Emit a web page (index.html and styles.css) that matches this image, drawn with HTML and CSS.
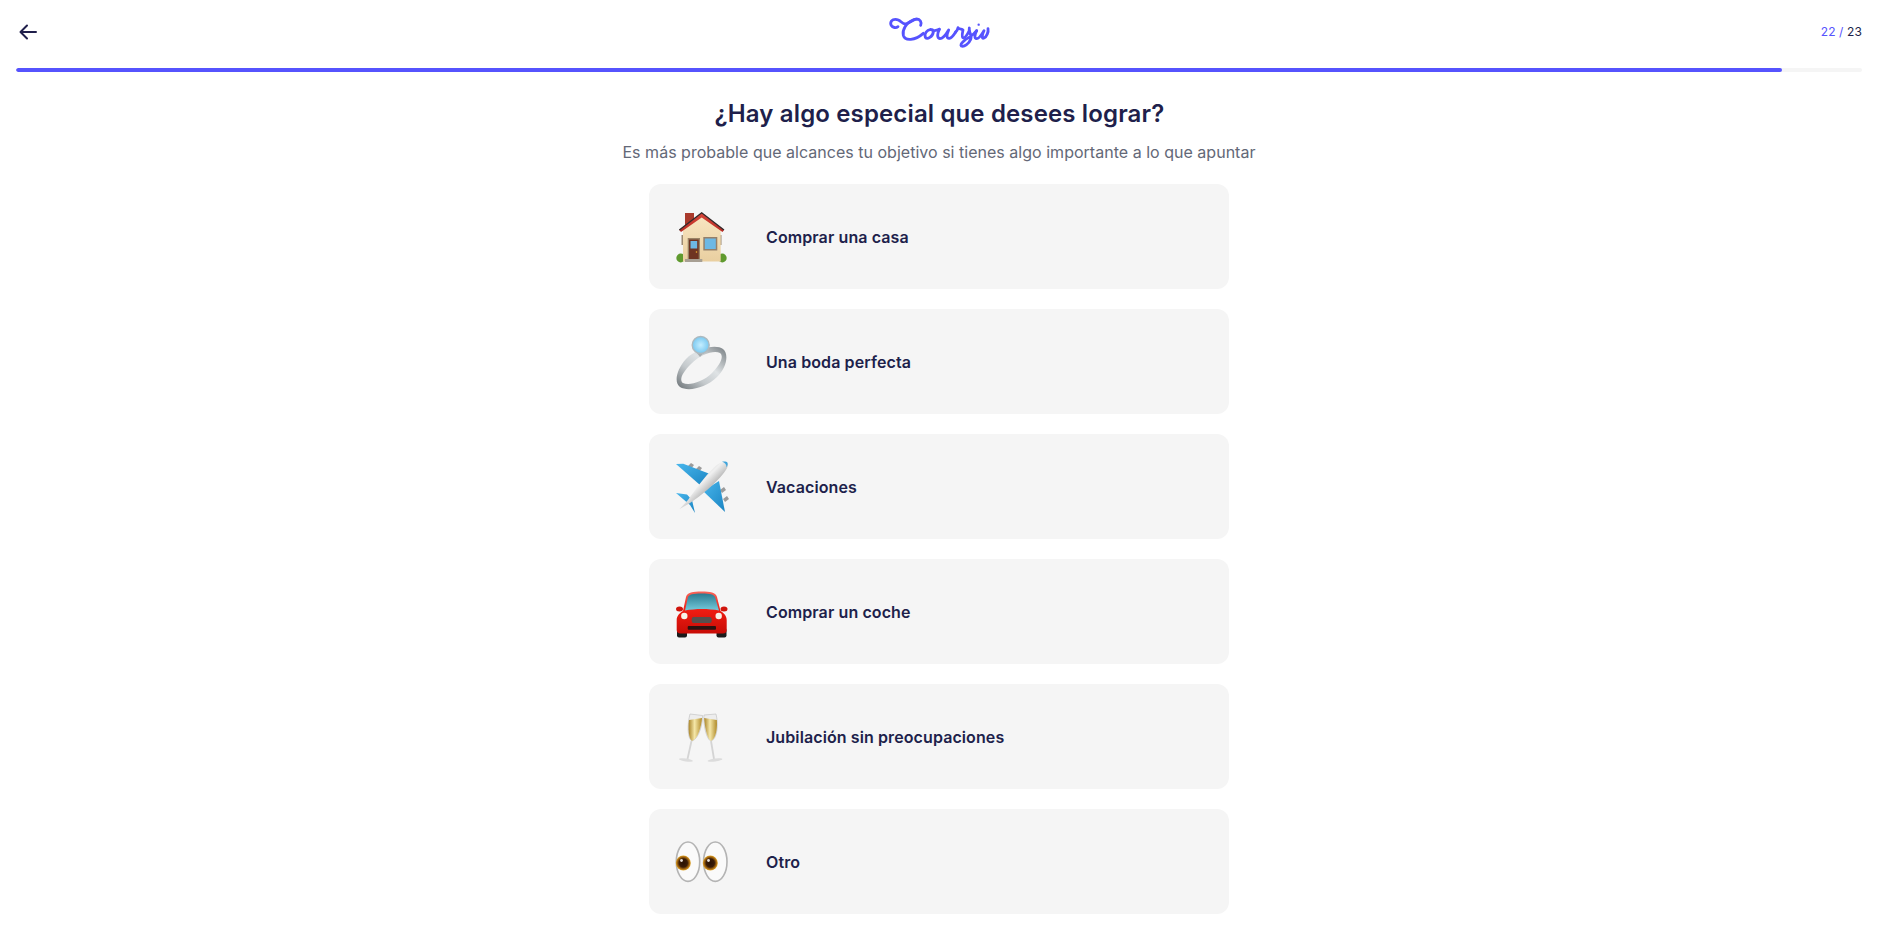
FILE: index.html
```html
<!DOCTYPE html>
<html lang="es">
<head>
<meta charset="utf-8">
<title>Coursiv</title>
<link rel="stylesheet" href="styles.css">
</head>
<body>
<header class="topbar">
  <svg class="back" width="24" height="24" viewBox="0 0 24 24" fill="none" stroke="#201f4b" stroke-width="2" stroke-linecap="round" stroke-linejoin="round"><path d="M20 12H5M11 5.500L4.500 12L11 18.500"/></svg>
  <svg class="logo" width="110" height="40" viewBox="75 30 330 120" fill="none" stroke="#5653fe" stroke-width="8.500" stroke-linecap="round" stroke-linejoin="round">
    <path d="M114 80C106 86 93 81 92 71C92 60 104 55 115 60C124 64 128 73 137 72C147 71 157 58 170 57C180 57 186 66 182 76"/>
    <path d="M160 60C138 68 126 90 130 106C135 124 165 122 190 100"/>
    <path d="M212 88C200 90 192 102 196 112C202 120 218 110 220 96C221 90 216 88 212 88C220 94 230 92 238 88"/>
    <path d="M238 88C232 100 230 114 240 116C250 116 260 100 266 90C260 104 258 116 268 115C276 114 282 104 287 96"/>
    <path d="M287 96C291 92 293 88 294 83C298 89 306 86 309 90C307 100 304 112 310 114C316 114 322 104 328 92"/>
    <path d="M328 84C324 96 338 104 332 118C326 132 312 142 304 138C298 132 316 118 328 112C338 106 344 100 350 92"/>
    <path d="M350 92C344 104 342 116 350 116C358 116 366 102 372 92C366 104 364 118 372 114C380 110 386 96 384 86"/>
    <circle cx="356" cy="74" r="3.500" fill="#5653fe" stroke="none"/>
  </svg>
  <div class="counter"><span class="current">22 /</span> 23</div>
</header>
<div class="track"><div class="fill"></div></div>
<main class="page">
  <h1 class="title">¿Hay algo especial que desees lograr?</h1>
  <p class="subtitle">Es más probable que alcances tu objetivo si tienes algo importante a lo que apuntar</p>
  <ul class="options">
    <li class="option">
      <svg class="emoji" viewBox="0 0 56 56">
        <defs><linearGradient id="wall" x1="0" y1="0" x2="0" y2="1"><stop offset="0" stop-color="#f8e6c2"/><stop offset="1" stop-color="#e9cfa0"/></linearGradient>
        <linearGradient id="roof" x1="0" y1="0" x2="0" y2="1"><stop offset="0" stop-color="#d8473a"/><stop offset="1" stop-color="#b82c24"/></linearGradient></defs>
        <rect x="12" y="4" width="9" height="13" fill="#a93a2c"/>
        <circle cx="7.700" cy="49" r="4.400" fill="#5f9a2e"/><circle cx="49.300" cy="49" r="4.400" fill="#5f9a2e"/>
        <rect x="8.500" y="26" width="40" height="10" fill="#9c8a72"/>
        <path d="M10 20L28.700 6L47.700 20V52.500H10Z" fill="url(#wall)"/>
        <path d="M6.300 21L28.700 3.800L51 21L49.500 23L28.700 8.500L8 23Z" fill="url(#roof)"/>
        <path d="M6.300 21L28.700 3.800L51 21" fill="none" stroke="#33292a" stroke-width="1.400"/>
        <rect x="14.700" y="29" width="12.300" height="21.500" fill="#9a8466"/>
        <rect x="16" y="30.500" width="9.700" height="20" fill="#6e3422"/>
        <rect x="17.500" y="32" width="6.700" height="7.500" fill="#6db8e4"/>
        <circle cx="23.500" cy="43" r=".8" fill="#f2b632"/>
        <rect x="30.300" y="28" width="14" height="13.500" fill="#94806a"/>
        <rect x="31.800" y="29.500" width="11" height="10.500" fill="#6db8e4"/>
        <rect x="12" y="50" width="17.300" height="3" fill="#a79f93"/>
      </svg>
      <span class="label">Comprar una casa</span>
    </li>
    <li class="option">
      <svg class="emoji" viewBox="0 0 56 56">
        <defs><linearGradient id="metal" x1="0" y1="1" x2="1" y2="0"><stop offset="0" stop-color="#6a7175"/><stop offset=".35" stop-color="#c4c9cc"/><stop offset=".6" stop-color="#dfe3e5"/><stop offset="1" stop-color="#757c80"/></linearGradient>
        <radialGradient id="gem"><stop offset="0" stop-color="#c5eeff"/><stop offset="1" stop-color="#79c8f0"/></radialGradient></defs>
        <path fill-rule="evenodd" d="M7 53C1 49 3 36 13 25C24 14 43 10 50 15C56 20 54 33 44 43C33 54 15 58 7 53ZM10 49C16 52 30 48 39 39C48 30 51 22 47 19C41 16 28 20 18 30C9 39 6 46 10 49Z" fill="url(#metal)"/>
        <path d="M21 15L27 23L34 15Z" fill="#a7adb0"/>
        <circle cx="27.700" cy="11" r="8.500" fill="url(#gem)" stroke="#aeb9be" stroke-width="1.400"/>
      </svg>
      <span class="label">Una boda perfecta</span>
    </li>
    <li class="option">
      <svg class="emoji" viewBox="0 0 56 56">
        <defs><linearGradient id="body" x1="0" y1="0" x2="1" y2="1"><stop offset=".25" stop-color="#c4c4c4"/><stop offset=".45" stop-color="#f0f0f0"/><stop offset=".75" stop-color="#808080"/></linearGradient>
        <linearGradient id="wing" x1="0" y1="0" x2="1" y2="1"><stop offset="0" stop-color="#48b6ec"/><stop offset="1" stop-color="#1a84c2"/></linearGradient></defs>
        <path d="M15 7l3-3 3 2-3 4ZM23 10l3-3 3 2-3 4ZM47 31l4-3 2 3-4 3ZM50 40l4-3 2 3-4 3Z" fill="#9b9b9b"/>
        <path d="M3 5L10.300 4.800L37 15L27 26Z" fill="url(#wing)"/>
        <path d="M52 53L46 22L30 32Z" fill="url(#wing)"/>
        <path d="M3 34L14 35.500L19 41L22 54L17 46Z" fill="url(#wing)"/>
        <path d="M54.300 3.400C51 1.500 46 3.500 41 8.500C32 17 22 31 15 41L6.300 50.200L17 44C28 37 43 24 50 15C54 10 56 6 54.300 3.400Z" fill="url(#body)"/>
        <path d="M49 2.800C51.500 2.400 53.700 2.700 54.300 3.400C55 4.500 54.700 6.500 53.500 8.300C53.500 5.500 52 3.500 49 2.800Z" fill="#3da4dc"/>
      </svg>
      <span class="label">Vacaciones</span>
    </li>
    <li class="option">
      <svg class="emoji" viewBox="0 0 56 56">
        <defs><linearGradient id="red" x1="0" y1="0" x2="0" y2="1"><stop offset="0" stop-color="#f7655a"/><stop offset=".45" stop-color="#ee1c12"/><stop offset="1" stop-color="#c80c06"/></linearGradient>
        <linearGradient id="glass" x1="0" y1="0" x2="0" y2="1"><stop offset="0" stop-color="#2a7a90"/><stop offset="1" stop-color="#74cadb"/></linearGradient></defs>
        <rect x="4" y="44" width="10" height="9.500" rx="2" fill="#1b1b1b"/><rect x="43.500" y="44" width="10" height="9.500" rx="2" fill="#1b1b1b"/>
        <ellipse cx="6.500" cy="25" rx="3.500" ry="2.500" fill="#d0140c"/><ellipse cx="51" cy="25" rx="3.500" ry="2.500" fill="#d0140c"/>
        <path d="M10 27L13 13C14 8.500 20 7.500 28.700 7.500C37 7.500 43 8.500 44 13L47.500 27C51 29 53.700 32 53.700 36V46C53.700 48 52.500 49.500 50 49.500H7.500C5 49.500 3.700 48 3.700 46V36C3.700 32 6.500 29 10 27Z" fill="url(#red)"/>
        <path d="M12 26.500L15 13C16 10.500 20 9.500 28.700 9.500C37 9.500 41 10.500 42 13L46 26.500C36 24.500 22 24.500 12 26.500Z" fill="url(#glass)"/>
        <circle cx="11.300" cy="32" r="3.200" fill="#f7f2e8"/><circle cx="45.700" cy="32" r="3.200" fill="#f7f2e8"/>
        <rect x="18.700" y="33" width="20" height="6" rx="2" fill="#56504e"/>
        <rect x="14.700" y="42" width="28.300" height="3.800" rx="1" fill="#2c1210"/>
      </svg>
      <span class="label">Comprar un coche</span>
    </li>
    <li class="option">
      <svg class="emoji" viewBox="0 0 56 56">
        <defs><linearGradient id="wine" x1="0" y1="0" x2="1" y2="0"><stop offset="0" stop-color="#a9842a"/><stop offset=".45" stop-color="#f5e7a8"/><stop offset="1" stop-color="#b08a28"/></linearGradient></defs>
        <path d="M17 5L29.500 6.500C30 14 26 30 19 32C14.500 30 14 16 17 5Z" fill="#ededed" stroke="#c4c4c4" stroke-width=".7"/>
        <path d="M16 11L29 9C28.500 17 25 30 19 32C15.500 30 15 19 16 11Z" fill="url(#wine)"/>
        <path d="M18.500 32L14.500 50" stroke="#d4d4d4" stroke-width="1.800" fill="none"/>
        <ellipse cx="13" cy="51" rx="7" ry="1.500" transform="rotate(8 13 51)" fill="#dcdcdc"/>
        <path d="M31 6L43 5C45.500 15 44.500 30 38 32C33.500 31 30 15 31 6Z" fill="#ededed" stroke="#c4c4c4" stroke-width=".7"/>
        <path d="M31.200 9L43.800 11C44.500 19 43 30 38 32C34 30 31.500 17 31.200 9Z" fill="url(#wine)"/>
        <path d="M38 32L41 50" stroke="#d4d4d4" stroke-width="1.800" fill="none"/>
        <ellipse cx="42" cy="51" rx="7.500" ry="1.500" transform="rotate(-8 42 51)" fill="#dcdcdc"/>
      </svg>
      <span class="label">Jubilación sin preocupaciones</span>
    </li>
    <li class="option">
      <svg class="emoji" viewBox="0 0 56 56">
        <defs><radialGradient id="iris"><stop offset="0" stop-color="#2a1203"/><stop offset=".55" stop-color="#3a1c06"/><stop offset=".82" stop-color="#a86a10"/><stop offset="1" stop-color="#e0a52a"/></radialGradient></defs>
        <ellipse cx="15" cy="27.700" rx="11.700" ry="19.700" fill="#fafafa" stroke="#b4b4b4" stroke-width="1.600"/>
        <ellipse cx="42.300" cy="27.700" rx="11.700" ry="19.700" fill="#fafafa" stroke="#b4b4b4" stroke-width="1.600"/>
        <circle cx="10.300" cy="29" r="7.500" fill="url(#iris)"/>
        <circle cx="37.300" cy="29" r="7.500" fill="url(#iris)"/>
        <circle cx="8.500" cy="26.500" r="1.400" fill="#e8e0d8"/>
        <circle cx="35.500" cy="26.500" r="1.400" fill="#e8e0d8"/>
      </svg>
      <span class="label">Otro</span>
    </li>
  </ul>
</main>
</body>
</html>
```
FILE: styles.css
```css
* { box-sizing: border-box; }
html, body { margin: 0; padding: 0; background: #fff; }
body { font-family: Inter, "Liberation Sans", sans-serif; color: #201f4b; }
.topbar { position: relative; display: flex; align-items: center; justify-content: space-between; height: 64px; padding: 0 16px; }
.back { display: block; }
.logo { position: absolute; left: 885px; top: 10px; }
.counter { font-size: 12px; line-height: 16px; font-weight: 400; letter-spacing: .12px; }
.current { color: #5653fe; }
.track { height: 4px; margin: 4px 16px 0; background: #f5f5f5; border-radius: 2px; overflow: hidden; }
.fill { width: 1766px; height: 100%; background: #5653fe; border-radius: 2px; }
.page { display: flex; flex-direction: column; align-items: center; }
.title { margin: 26px 0 0 1px; font-size: 24px; line-height: 32px; font-weight: 600; letter-spacing: .14px; }
.subtitle { margin: 10px 0 0; font-size: 16px; line-height: 24px; color: #636877; letter-spacing: .02px; }
.options { list-style: none; width: 580px; margin: 20px 0 0; padding: 0; display: flex; flex-direction: column; gap: 20px; }
.option { display: flex; align-items: center; gap: 37px; height: 105px; padding-left: 24px; background: #f5f5f5; border-radius: 12px; }
.emoji { display: block; width: 56px; height: 56px; flex: none; }
.label { font-size: 16px; line-height: 24px; font-weight: 600; letter-spacing: .1px; }
```
